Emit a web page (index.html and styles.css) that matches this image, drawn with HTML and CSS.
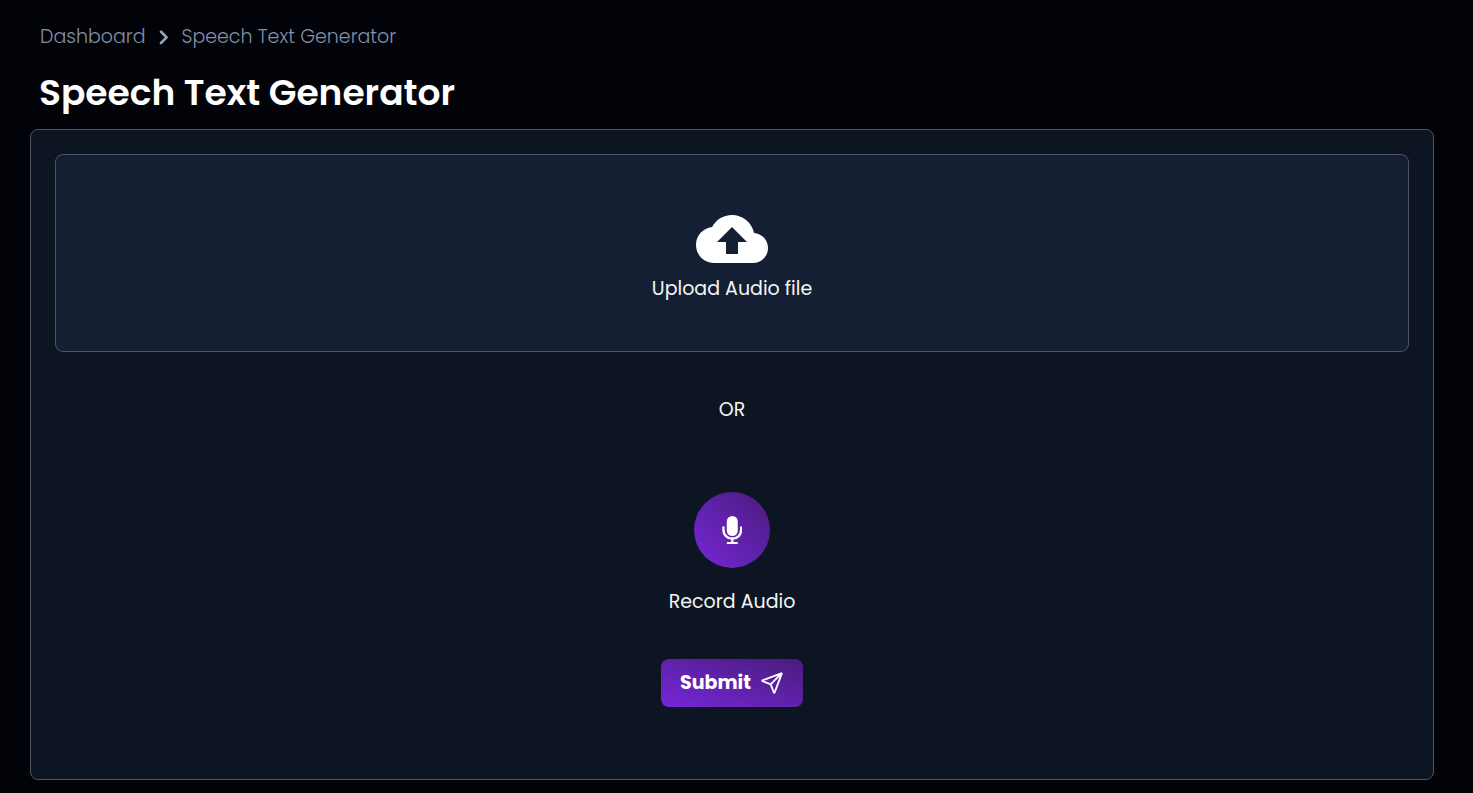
FILE: index.html
```html
<!DOCTYPE html>
<html lang="en">
<head>
<meta charset="utf-8">
<meta name="viewport" content="width=device-width, initial-scale=1">
<title>Speech Text Generator</title>
<link rel="stylesheet" href="styles.css">
</head>
<body>
<main class="page">
  <nav class="breadcrumb" aria-label="Breadcrumb">
    <a href="#dashboard">Dashboard</a>
    <svg class="chevron" viewBox="0 0 12 16" aria-hidden="true"><path d="M3 2.8L8.6 8.4L3 14" fill="none" stroke="currentColor" stroke-width="2.7" stroke-linecap="round" stroke-linejoin="round"/></svg>
    <a href="#speech" aria-current="page">Speech Text Generator</a>
  </nav>
  <h1 class="title">Speech Text Generator</h1>
  <section class="card">
    <button class="upload" type="button">
      <svg class="cloud" viewBox="0 4 24 16" aria-hidden="true"><path fill="currentColor" d="M19.35 10.04C18.67 6.59 15.64 4 12 4 9.11 4 6.6 5.64 5.35 8.04 2.34 8.36 0 10.91 0 14c0 3.31 2.69 6 6 6h13c2.76 0 5-2.24 5-5 0-2.64-2.05-4.78-4.65-4.96zM14 13v4h-4v-4H7l5-5 5 5h-3z"/></svg>
      <span>Upload Audio file</span>
    </button>
    <p class="or">OR</p>
    <button class="record" type="button" aria-labelledby="record-label">
      <svg class="mic" viewBox="0 0 20 28" aria-hidden="true"><rect x="4.8" y="0" width="11" height="20" rx="5.5" fill="currentColor"/><path d="M1.4 11.5V13.5C1.4 18.8 5.2 22.6 10.3 22.6S19.2 18.8 19.2 13.5V11.5" fill="none" stroke="currentColor" stroke-width="2.4" stroke-linecap="round"/><path d="M10.3 22.6V27M5.8 27H14.8" fill="none" stroke="currentColor" stroke-width="2.2" stroke-linecap="round"/></svg>
    </button>
    <p class="record-label" id="record-label">Record Audio</p>
    <button class="submit" type="submit">
      <span>Submit</span>
      <svg class="plane" viewBox="0 0 512 512" aria-hidden="true"><path d="M53.12 199.94l400-151.39a8 8 0 0110.33 10.33l-151.39 400a8 8 0 01-15-.34l-67.4-166.09a16 16 0 00-10.11-10.11L53.46 215a8 8 0 01-.34-15.06zM460 52L227 285" fill="none" stroke="currentColor" stroke-width="40" stroke-linecap="round" stroke-linejoin="round"/></svg>
    </button>
  </section>
</main>
</body>
</html>
```
FILE: styles.css
```css
* {
  box-sizing: border-box;
}

body {
  margin: 0;
  min-height: 100vh;
  background: #010308;
  color: #f4f4f5;
  font-family: Poppins, Inter, "Open Sans", sans-serif;
  font-size: 19px;
  line-height: 28px;
}

button {
  border: 0;
  padding: 0;
  color: inherit;
  font: inherit;
  cursor: pointer;
}

p {
  margin: 0;
}

.page {
  display: flex;
  flex-direction: column;
  min-height: 100vh;
  padding: 23px 39px 13px 30px;
}

.breadcrumb {
  display: flex;
  align-items: center;
  gap: 12px;
  padding-left: 10px;
  color: #8291a9;
  font-weight: 300;
}

.breadcrumb a {
  color: inherit;
  text-decoration: none;
}

.chevron {
  width: 12px;
  height: 16px;
  color: #94a3b8;
}

.title {
  margin: 19px 0 14px;
  padding-left: 9px;
  color: #fff;
  font-size: 36px;
  font-weight: 600;
  line-height: 45px;
}

.card {
  display: flex;
  flex: 1;
  flex-direction: column;
  align-items: center;
  padding: 24px;
  border: 1px solid #4b5563;
  border-radius: 8px;
  background: #0d1522;
}

.upload {
  display: flex;
  flex-direction: column;
  align-items: center;
  gap: 12px;
  align-self: stretch;
  padding: 60px 24px 48px;
  border: 1px solid #4b5563;
  border-radius: 8px;
  background: #151f33;
}

.cloud {
  width: 72px;
  height: 48px;
  color: #fff;
}

.or {
  margin: 44px 0 68px;
}

.record,
.submit {
  background: linear-gradient(to top right, #7527d8, #4a1c7c);
  color: #fff;
}

.record {
  display: grid;
  place-items: center;
  width: 76px;
  height: 76px;
  border-radius: 50%;
}

.mic {
  width: 20px;
  height: 28px;
}

.record-label {
  margin: 20px 0 43px;
}

.submit {
  display: flex;
  align-items: center;
  justify-content: center;
  gap: 9px;
  height: 48px;
  padding: 0 19px;
  border-radius: 8px;
  font-weight: 700;
}

.plane {
  width: 24px;
  height: 24px;
}
```
